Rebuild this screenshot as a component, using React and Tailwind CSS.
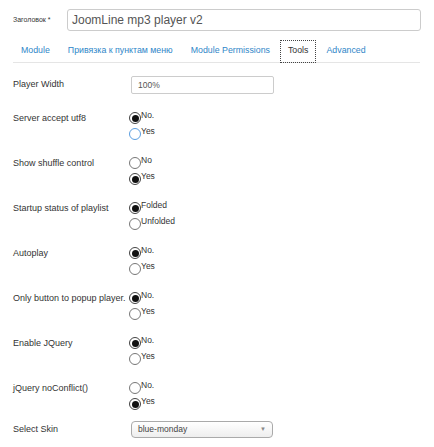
const tabs = [
  { label: "Module" },
  { label: "Привязка к пунктам меню" },
  { label: "Module Permissions" },
  { label: "Tools", active: true },
  { label: "Advanced" },
];

const radioRows = [
  { label: "Server accept utf8", options: ["No.", "Yes"], checked: 0, focus: 1 },
  { label: "Show shuffle control", options: ["No", "Yes"], checked: 1 },
  { label: "Startup status of playlist", options: ["Folded", "Unfolded"], checked: 0 },
  { label: "Autoplay", options: ["No.", "Yes"], checked: 0 },
  { label: "Only button to popup player.", options: ["No.", "Yes"], checked: 0 },
  { label: "Enable JQuery", options: ["No.", "Yes"], checked: 0 },
  { label: "jQuery noConflict()", options: ["No.", "Yes"], checked: 1 },
];

const Radio = ({ text, checked, focus }) => {
  return (
    <div className="flex items-start h-[14px] -ml-[2px]">
      <span
        className={`w-[12px] h-[12px] rounded-full border flex items-center justify-center bg-white ${
          checked ? "border-[#444]" : focus ? "border-[#5b9ee0]" : "border-[#777]"
        }`}
      >
        {checked && <span className="w-[7px] h-[7px] rounded-full bg-[#111]" />}
      </span>
      <span className="text-[8.5px] leading-[8px] text-[#333] -mt-[1px]">{text}</span>
    </div>
  );
};

const RadioRow = ({ row }) => {
  return (
    <div className="flex h-[45px]">
      <div className="w-[118px] text-[9px] leading-[12px] text-[#333]">{row.label}</div>
      <div className="flex flex-col gap-[2px]">
        {row.options.map((opt, i) => (
          <Radio key={opt} text={opt} checked={row.checked === i} focus={row.focus === i} />
        ))}
      </div>
    </div>
  );
};

export default function App() {
  return (
    <div
      className="w-[434px] h-[447px] bg-white overflow-hidden pl-[13px]"
      style={{ fontFamily: '"Liberation Sans", Arial, sans-serif' }}
    >
      <div className="flex items-center pt-[9px]">
        <div className="w-[54px] text-[7px] text-[#333]">Заголовок *</div>
        <div className="w-[354px] h-[22px] border border-[#ccc] rounded-[3px] flex items-center pl-[4px] text-[12px] text-[#555]">
          JoomLine mp3 player v2
        </div>
      </div>

      <div className="mt-[9px] w-[407px] h-[23px] border-b border-[#e5e5e5] flex items-center">
        {tabs.map((t) =>
          t.active ? (
            <div
              key={t.label}
              className="h-[23px] pl-[7px] pr-[7px] mr-[2px] flex items-center border border-dotted border-[#444] text-[8.8px] text-[#333]"
            >
              {t.label}
            </div>
          ) : (
            <div key={t.label} className="px-[8px] mr-[2px] text-[8.8px] text-[#2f86c8]">
              {t.label}
            </div>
          )
        )}
      </div>

      <div className="flex items-center mt-[13px] h-[18px]">
        <div className="w-[118px] text-[9px] text-[#333]">Player Width</div>
        <div className="w-[143px] h-[18px] border border-[#ccc] rounded-[2px] flex items-center pl-[6px] text-[8.5px] text-[#555]">
          100%
        </div>
      </div>

      <div className="mt-[18px]">
        {radioRows.map((row) => (
          <RadioRow key={row.label} row={row} />
        ))}
      </div>

      <div className="flex items-center -mt-[6px]">
        <div className="w-[118px] text-[9px] text-[#333]">Select Skin</div>
        <div className="w-[142px] h-[17px] border border-[#aaa] rounded-[4px] bg-gradient-to-b from-white to-[#eee] flex items-center justify-between pl-[6px] pr-[6px] text-[8.5px] text-[#444]">
          <span>blue-monday</span>
          <span className="text-[6px] text-[#888]">▼</span>
        </div>
      </div>
    </div>
  );
}
